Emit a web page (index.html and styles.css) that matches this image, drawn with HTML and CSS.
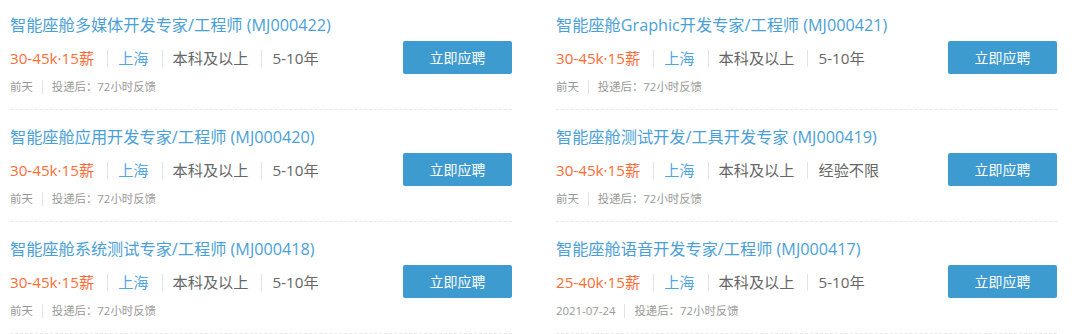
FILE: index.html
```html
<!DOCTYPE html>
<html lang="zh-CN">
<head>
  <meta charset="UTF-8" />
  <meta name="viewport" content="width=device-width, initial-scale=1.0"/>
  <title>职位列表</title>
  <link rel="stylesheet" href="styles.css">
</head>
<body>
  <main class="job-list">
    <!-- row 1 -->
    <div class="job">
      <div class="info">
        <h3 class="title">智能座舱多媒体开发专家/工程师 (MJ000422)</h3>
        <p class="meta"><span class="salary">30-45k·15薪</span><span class="city">上海</span><span>本科及以上</span><span>5-10年</span></p>
        <p class="foot"><span>前天</span><span>投递后：72小时反馈</span></p>
      </div>
      <button class="apply">立即应聘</button>
    </div>
    <div class="job">
      <div class="info">
        <h3 class="title">智能座舱Graphic开发专家/工程师 (MJ000421)</h3>
        <p class="meta"><span class="salary">30-45k·15薪</span><span class="city">上海</span><span>本科及以上</span><span>5-10年</span></p>
        <p class="foot"><span>前天</span><span>投递后：72小时反馈</span></p>
      </div>
      <button class="apply">立即应聘</button>
    </div>

    <!-- row 2 -->
    <div class="job">
      <div class="info">
        <h3 class="title">智能座舱应用开发专家/工程师 (MJ000420)</h3>
        <p class="meta"><span class="salary">30-45k·15薪</span><span class="city">上海</span><span>本科及以上</span><span>5-10年</span></p>
        <p class="foot"><span>前天</span><span>投递后：72小时反馈</span></p>
      </div>
      <button class="apply">立即应聘</button>
    </div>
    <div class="job">
      <div class="info">
        <h3 class="title">智能座舱测试开发/工具开发专家 (MJ000419)</h3>
        <p class="meta"><span class="salary">30-45k·15薪</span><span class="city">上海</span><span>本科及以上</span><span>经验不限</span></p>
        <p class="foot"><span>前天</span><span>投递后：72小时反馈</span></p>
      </div>
      <button class="apply">立即应聘</button>
    </div>

    <!-- row 3 -->
    <div class="job">
      <div class="info">
        <h3 class="title">智能座舱系统测试专家/工程师 (MJ000418)</h3>
        <p class="meta"><span class="salary">30-45k·15薪</span><span class="city">上海</span><span>本科及以上</span><span>5-10年</span></p>
        <p class="foot"><span>前天</span><span>投递后：72小时反馈</span></p>
      </div>
      <button class="apply">立即应聘</button>
    </div>
    <div class="job">
      <div class="info">
        <h3 class="title">智能座舱语音开发专家/工程师 (MJ000417)</h3>
        <p class="meta"><span class="salary">25-40k·15薪</span><span class="city">上海</span><span>本科及以上</span><span>5-10年</span></p>
        <p class="foot"><span>2021-07-24</span><span>投递后：72小时反馈</span></p>
      </div>
      <button class="apply">立即应聘</button>
    </div>
  </main>
</body>
</html>
```

FILE: styles.css
```css
body {
  margin: 0;
  background: #fff;
  font-family: "Open Sans", "Noto Sans CJK SC", sans-serif;
  color: #666;
}

.job-list {
  display: grid;
  grid-template-columns: 502px 501px;
  column-gap: 44px;
  padding-left: 10px;
  margin-top: -2px;
}

.job {
  display: flex;
  align-items: center;
  padding: 17px 0 14px;
  border-bottom: 1px dashed #e8e8e8;
}

.info {
  flex: 1;
  min-width: 0;
}

.title {
  margin: 0;
  font-size: 16.2px;
  font-weight: normal;
  line-height: 20px;
  color: #4a9fd8;
  white-space: nowrap;
}

.meta {
  margin: 12px 0 0;
  display: flex;
  align-items: center;
  font-size: 15.2px;
  line-height: 22px;
  color: #666;
}

.meta span + span {
  margin-left: 13px;
  padding-left: 10px;
  border-left: 1px solid #e3e3e3;
  line-height: 17px;
}

.salary {
  color: #ff6c37;
}

.meta .city {
  color: #52a6e0;
}

.foot {
  margin: 10px 0 0;
  display: flex;
  align-items: center;
  font-size: 11.4px;
  line-height: 16px;
  color: #999;
}

.foot span + span {
  margin-left: 9px;
  padding-left: 9px;
  border-left: 1px solid #e3e3e3;
  line-height: 14px;
}

.apply {
  width: 109px;
  height: 33px;
  margin-top: 4px;
  border: none;
  border-radius: 2px;
  background: #3d9bcf;
  color: #fff;
  font-family: inherit;
  font-size: 14px;
  cursor: pointer;
}
```
